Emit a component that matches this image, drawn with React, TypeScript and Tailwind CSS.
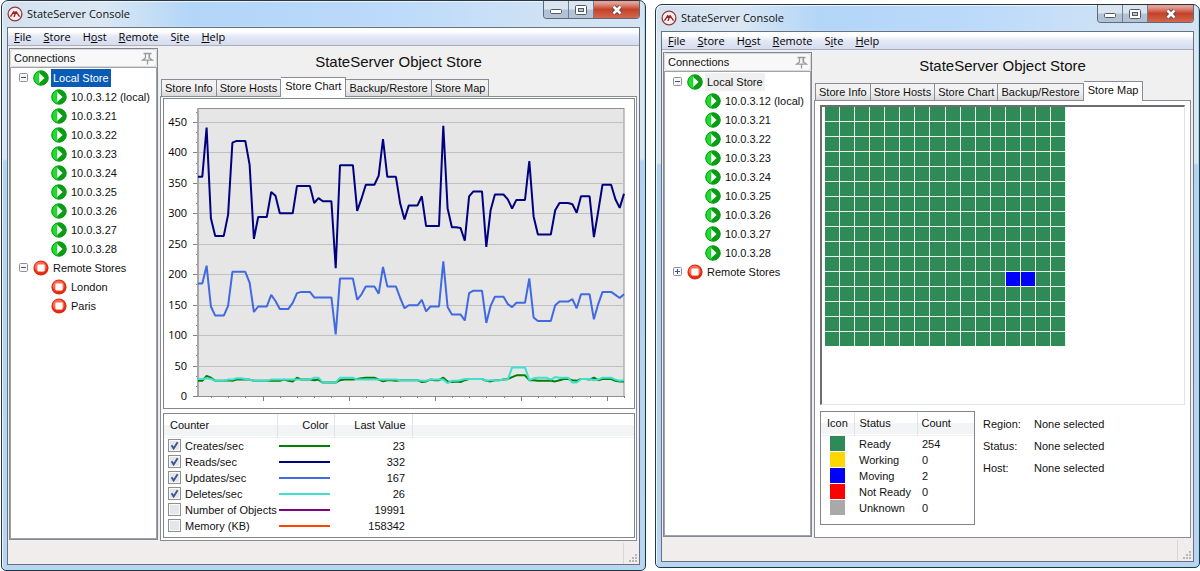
import { useState } from "react";
import type { ReactNode } from "react";

type NodeType = {
  label: string;
  kind: "play" | "stop";
};

type StoreNodeType = NodeType & {
  expanded: boolean;
  mark?: "selected" | "dimmed";
  children: NodeType[];
};

type CounterType = {
  name: string;
  color: string;
  value: string;
  checked: boolean;
};

const menuItems = [
  ["", "F", "ile"],
  ["", "S", "tore"],
  ["H", "o", "st"],
  ["", "R", "emote"],
  ["S", "i", "te"],
  ["", "H", "elp"],
];

const tabs = [
  "Store Info",
  "Store Hosts",
  "Store Chart",
  "Backup/Restore",
  "Store Map",
];

const hosts: NodeType[] = [
  "10.0.3.12 (local)",
  "10.0.3.21",
  "10.0.3.22",
  "10.0.3.23",
  "10.0.3.24",
  "10.0.3.25",
  "10.0.3.26",
  "10.0.3.27",
  "10.0.3.28",
].map((label) => ({ label, kind: "play" }));

const remotes: NodeType[] = [
  { label: "London", kind: "stop" },
  { label: "Paris", kind: "stop" },
];

const counters: CounterType[] = [
  { name: "Creates/sec", color: "#008000", value: "23", checked: true },
  { name: "Reads/sec", color: "#000080", value: "332", checked: true },
  { name: "Updates/sec", color: "#4169e1", value: "167", checked: true },
  { name: "Deletes/sec", color: "#40e0d0", value: "26", checked: true },
  { name: "Number of Objects", color: "#800080", value: "19991", checked: false },
  { name: "Memory (KB)", color: "#ff4500", value: "158342", checked: false },
];

const reads = [
  360, 360, 441, 292, 263, 263, 263, 298, 416, 419, 419, 419, 380, 258, 294,
  294, 294, 335, 329, 300, 300, 300, 300, 345, 345, 345, 345, 317, 325, 320,
  320, 320, 210, 379, 379, 379, 379, 304, 324, 347, 347, 347, 362, 422, 360,
  360, 360, 316, 290, 313, 313, 313, 328, 279, 279, 279, 279, 444, 308, 277,
  277, 276, 255, 328, 336, 336, 336, 245, 305, 331, 331, 331, 323, 308, 322,
  322, 322, 386, 295, 265, 265, 265, 265, 305, 317, 317, 317, 315, 301, 328,
  328, 328, 261, 303, 347, 347, 347, 323, 309, 332,
];

const updates = [
  185, 185, 214, 147, 132, 132, 132, 148, 204, 204, 204, 204, 186, 138, 147,
  147, 147, 166, 156, 143, 143, 143, 153, 169, 171, 171, 171, 162, 162, 162,
  162, 162, 101, 193, 193, 193, 193, 158, 167, 180, 180, 180, 168, 212, 180,
  180, 180, 161, 144, 149, 149, 149, 158, 139, 147, 147, 147, 221, 146, 134,
  134, 134, 124, 169, 173, 173, 173, 120, 148, 163, 163, 163, 151, 146, 153,
  153, 153, 193, 129, 123, 123, 123, 123, 149, 155, 155, 155, 159, 144, 167,
  167, 167, 126, 151, 171, 171, 171, 166, 161, 167,
];

const creates = [
  25, 25, 33, 30, 25, 25, 25, 26, 25, 27, 27, 27, 27, 25, 25, 25, 25, 25, 25,
  25, 27, 25, 24, 30, 27, 27, 27, 26, 27, 22, 22, 22, 22, 26, 27, 27, 27, 28,
  29, 30, 30, 30, 27, 24, 26, 26, 25, 26, 26, 26, 26, 26, 23, 24, 27, 26, 26,
  30, 24, 23, 24, 23, 26, 28, 28, 28, 28, 25, 24, 26, 26, 27, 28, 31, 34, 34,
  34, 26, 26, 25, 25, 25, 25, 24, 26, 28, 28, 26, 25, 28, 28, 27, 30, 26, 28,
  28, 28, 25, 24, 24,
];

const deletes = [
  28, 28, 29, 28, 25, 25, 25, 27, 27, 29, 29, 28, 27, 25, 25, 25, 25, 27, 27,
  27, 27, 27, 27, 27, 27, 27, 27, 30, 30, 22, 22, 22, 22, 30, 30, 30, 30, 27,
  27, 27, 27, 27, 27, 27, 27, 27, 27, 26, 26, 26, 26, 26, 25, 25, 27, 27, 27,
  27, 21, 25, 25, 26, 28, 28, 28, 28, 28, 25, 26, 26, 26, 27, 27, 47, 47, 47,
  47, 26, 29, 30, 30, 30, 27, 31, 30, 30, 30, 22, 22, 28, 28, 28, 26, 27, 30,
  30, 30, 27, 25, 26,
];

const legend = [
  { name: "Ready", count: 254, color: "#2e8b57" },
  { name: "Working", count: 0, color: "#ffd700" },
  { name: "Moving", count: 2, color: "#0000ff" },
  { name: "Not Ready", count: 0, color: "#ff0000" },
  { name: "Unknown", count: 0, color: "#a9a9a9" },
];

const Logo = () => (
  <svg viewBox="0 0 16 16" className="size-4 shrink-0">
    <circle cx="8" cy="8" r="6.9" fill="#f6eeee" stroke="#98363a" strokeWidth="1.3" />
    <path
      d="M3.8 10.2 6.8 5.6 8 8.2M7.2 10.4 9 5.6 12.2 10.2"
      fill="none"
      stroke="#8c2a2e"
      strokeWidth="1.4"
      strokeLinecap="round"
      strokeLinejoin="round"
    />
  </svg>
);

const PinIcon = () => (
  <svg viewBox="0 0 13 13" className="size-[13px]">
    <path
      d="M2.5 1.5h8M4.5 1.5v4.4L1.5 8.2h10L8.5 5.9V1.5M6.5 8.2v4.3"
      fill="#fff"
      stroke="#9a9a9a"
      strokeWidth="1.3"
    />
    <path d="M7.4 2v4.3l1.2 1.2" fill="none" stroke="#bdbdbd" />
  </svg>
);

const StatusIcon = ({ kind }: { kind: "play" | "stop" }) => {
  if (kind === "play") {
    return (
      <svg viewBox="0 0 16 16" className="size-4 shrink-0">
        <circle cx="8" cy="8" r="7.6" fill="#0a9c14" />
        <path d="M7 .9a7.2 7.2 0 0 0 0 14.2A22 22 0 0 1 7 .9z" fill="#1fdc2e" />
        <circle cx="8" cy="8" r="7.2" fill="none" stroke="#08a014" strokeWidth=".8" />
        <path d="M6.2 3 11.6 8l-5.4 5z" fill="#fff" />
      </svg>
    );
  }
  return (
    <svg viewBox="0 0 16 16" className="size-4 shrink-0">
      <circle cx="8" cy="8" r="7.6" fill="#e02c14" />
      <circle cx="7.6" cy="7.2" r="5.8" fill="#ff6a50" />
      <path d="M2.2 9a6.2 6.2 0 0 0 11.6 0A7.4 7.4 0 0 1 2.2 9z" fill="#f52a0c" />
      <rect x="4.4" y="4.4" width="7.2" height="7.2" rx="1" fill="#fff" />
    </svg>
  );
};

const Expander = ({ open }: { open: boolean }) => (
  <svg viewBox="0 0 9 9" className="size-[9px]">
    <rect x=".5" y=".5" width="8" height="8" rx="1" fill="#f6f6f6" stroke="#919191" />
    <path d={open ? "M2 4.5h5" : "M2 4.5h5M4.5 2v5"} stroke="#3a519c" />
  </svg>
);

const CaptionButtons = () => (
  <div className="flex h-[18px] overflow-hidden rounded-b-[4px] border border-t-0 border-[#5c6b7c]">
    <button
      aria-label="Minimize"
      className="flex w-[25px] items-center justify-center border-r border-[#6f7f90] bg-linear-to-b from-[#dbe5ef] from-45% to-[#b3c3d5] to-55%"
    >
      <svg viewBox="0 0 12 10" className="h-[10px] w-3">
        <rect x=".5" y="4.5" width="11" height="4" rx="1" fill="#fff" stroke="#525a68" />
      </svg>
    </button>
    <button
      aria-label="Maximize"
      className="flex w-[25px] items-center justify-center border-r border-[#6f7f90] bg-linear-to-b from-[#dbe5ef] from-45% to-[#b3c3d5] to-55%"
    >
      <svg viewBox="0 0 12 10" className="h-[10px] w-3">
        <rect x=".5" y=".5" width="11" height="9" rx="1" fill="#fff" stroke="#525a68" />
        <rect x="3.5" y="3.5" width="5" height="3" fill="#b9c6d6" stroke="#525a68" />
      </svg>
    </button>
    <button
      aria-label="Close"
      className="flex w-[45px] items-center justify-center bg-linear-to-b from-[#e5a195] from-10% via-[#c4412a] via-50% to-[#d4674a]"
    >
      <svg viewBox="0 0 12 10" className="h-[10px] w-3">
        <path d="M2.5 1.5 9.5 8.5M9.5 1.5 2.5 8.5" stroke="#57434a" strokeWidth="4.4" />
        <path d="M2.5 1.5 9.5 8.5M9.5 1.5 2.5 8.5" stroke="#fff" strokeWidth="2.6" />
      </svg>
    </button>
  </div>
);

const TreeRow = ({
  node,
  mark,
  child,
}: {
  node: NodeType;
  mark?: "selected" | "dimmed";
  child?: boolean;
}) => (
  <div
    className={
      child
        ? "flex h-[19px] items-center gap-[2px] pl-10 whitespace-nowrap"
        : "flex h-[19px] items-center gap-[2px] whitespace-nowrap"
    }
  >
    <StatusIcon kind={node.kind} />
    <span
      className={
        mark === "selected"
          ? "bg-[#0a5bb5] px-[2px] leading-[18px] text-white"
          : mark === "dimmed"
            ? "bg-[#f0f0f0] px-[2px] leading-[18px]"
            : "px-[2px] leading-[18px]"
      }
    >
      {node.label}
    </span>
  </div>
);

const Connections = ({ stores }: { stores: StoreNodeType[] }) => {
  const [open, setOpen] = useState(stores.map((s) => s.expanded));

  return (
    <aside className="flex w-[149px] shrink-0 flex-col border border-[#82868f] bg-[#f0f0f0]">
      <div className="flex h-[18px] items-center justify-between rounded-[3px] border border-[#d9d9d9] bg-[#f8f8f8] pr-[2px] pl-[3px]">
        <h2>Connections</h2>
        <button aria-label="Pin panel">
          <PinIcon />
        </button>
      </div>
      <ul className="flex-1 border border-[#a0a3a9] bg-white">
        {stores.map((store, i) => (
          <li key={store.label}>
            <div className="flex items-center gap-[5px] pl-2">
              <button
                aria-label={store.label}
                aria-expanded={open[i]}
                onClick={() => setOpen(open.map((o, j) => (j === i ? !o : o)))}
              >
                <Expander open={open[i]} />
              </button>
              <TreeRow node={store} mark={store.mark} />
            </div>
            {open[i] && (
              <ul>
                {store.children.map((child) => (
                  <li key={child.label}>
                    <TreeRow node={child} child />
                  </li>
                ))}
              </ul>
            )}
          </li>
        ))}
      </ul>
    </aside>
  );
};

const PLOT = { left: 34, right: 460, top: 9, bottom: 297 };
const UNIT = 274 / 450;

const toPoints = (values: number[]) =>
  values
    .map((v, i) => {
      const x = PLOT.left + (i * (PLOT.right - PLOT.left)) / (values.length - 1);
      return `${x.toFixed(1)},${(PLOT.bottom - v * UNIT).toFixed(1)}`;
    })
    .join(" ");

const StoreChart = () => {
  const majors = Array.from({ length: 10 }, (_, i) => i * 50);
  const minors = Array.from({ length: 29 }, (_, i) => (i * 50) / 3);
  const ticks = Array.from({ length: 25 }, (_, i) => i * 4 + 3);

  return (
    <svg viewBox="0 0 470 309" className="block w-full" role="img" aria-label="Store Chart">
      <rect
        x={PLOT.left}
        y={PLOT.top + 0.5}
        width={PLOT.right - PLOT.left}
        height={PLOT.bottom - PLOT.top}
        fill="#e6e6e6"
        stroke="#909090"
      />
      {majors.slice(1).map((v) => (
        <path
          key={v}
          d={`M${PLOT.left} ${Math.round(PLOT.bottom - v * UNIT) + 0.5}H${PLOT.right}`}
          stroke="#c0c0c0"
        />
      ))}
      {minors.map((v) => (
        <path
          key={v}
          d={`M${PLOT.left - 2} ${Math.round(PLOT.bottom - v * UNIT) + 0.5}h2`}
          stroke="#808080"
        />
      ))}
      {majors.map((v) => (
        <g key={v}>
          <path
            d={`M${PLOT.left - 5} ${Math.round(PLOT.bottom - v * UNIT) + 0.5}h5`}
            stroke="#808080"
          />
          <text
            x="23"
            y={Math.round(PLOT.bottom - v * UNIT) + 4}
            textAnchor="end"
            className="fill-black font-['Open_Sans',sans-serif] text-[11px]"
          >
            {v}
          </text>
        </g>
      ))}
      <path d={`M${PLOT.left} ${PLOT.top}V${PLOT.bottom}`} stroke="#a8a8a8" strokeWidth="2" />
      {ticks.map((i) => (
        <path
          key={i}
          d={`M${Math.round(PLOT.left + (i * 426) / 99) + 0.5} ${PLOT.bottom}v${i % 20 === 15 ? 5 : 2}`}
          stroke="#808080"
        />
      ))}
      <polyline points={toPoints(reads)} fill="none" stroke="#000080" strokeWidth="2" strokeLinejoin="bevel" />
      <polyline points={toPoints(updates)} fill="none" stroke="#4169e1" strokeWidth="2" strokeLinejoin="bevel" />
      <polyline points={toPoints(creates)} fill="none" stroke="#008000" strokeWidth="2" strokeLinejoin="bevel" />
      <polyline points={toPoints(deletes)} fill="none" stroke="#40e0d0" strokeWidth="2" strokeLinejoin="bevel" />
    </svg>
  );
};

const CounterTable = () => {
  const [rows, setRows] = useState(counters);

  const toggle = (name: string) =>
    setRows(rows.map((r) => (r.name === name ? { ...r, checked: !r.checked } : r)));

  return (
    <table className="w-full table-fixed">
      <colgroup>
        <col className="w-[113px]" />
        <col className="w-[57px]" />
        <col className="w-[78px]" />
        <col />
      </colgroup>
      <thead>
        <tr className="h-[23px] border-b border-[#f0f0f2] bg-linear-to-b from-white from-50% to-[#f3f4f6] to-50%">
          <th className="border-r border-[#e2e3e6] pl-[6px] text-left font-normal">Counter</th>
          <th className="border-r border-[#e2e3e6] pr-[5px] text-right font-normal">Color</th>
          <th className="border-r border-[#e2e3e6] pr-[6px] text-right font-normal">Last Value</th>
          <td />
        </tr>
      </thead>
      <tbody>
        {rows.map((row) => (
          <tr key={row.name} className="h-4">
            <td className="pl-1">
              <label className="flex items-center gap-1 leading-4 whitespace-nowrap">
                <span className="relative size-[13px] shrink-0">
                  <input
                    type="checkbox"
                    checked={row.checked}
                    onChange={() => toggle(row.name)}
                    className="peer block size-[13px] appearance-none border border-[#8e8f8f] bg-[#e4e6ea] shadow-[inset_0_0_0_1px_#fafafa]"
                  />
                  <svg
                    viewBox="0 0 13 13"
                    className="pointer-events-none absolute inset-0 hidden size-[13px] peer-checked:block"
                  >
                    <path d="M3.5 6.2 5.6 9.4 9.6 3.2" fill="none" stroke="#3d5590" strokeWidth="1.9" />
                  </svg>
                </span>
                {row.name}
              </label>
            </td>
            <td className="pl-[2px]">
              <div className="h-[2px] w-[51px]" style={{ backgroundColor: row.color }} />
            </td>
            <td className="pr-[7px] text-right leading-4">{row.value}</td>
            <td />
          </tr>
        ))}
      </tbody>
    </table>
  );
};

const StoreMap = () => (
  <div className="h-[300px] border-t-2 border-r border-b border-l-2 border-t-[#6d6d6d] border-r-[#e3e3e3] border-b-[#e3e3e3] border-l-[#6d6d6d] bg-white pl-[3px]">
    <div className="grid w-[241px] grid-cols-16 gap-px border-r border-[#e8f3ec] bg-[#e8f3ec]">
      {Array.from({ length: 256 }, (_, i) => (
        <div
          key={i}
          className={i === 188 || i === 189 ? "h-[14px] bg-[#0000ff]" : "h-[14px] bg-[#2e8b57]"}
        />
      ))}
    </div>
  </div>
);

const Legend = () => (
  <div className="h-[114px] w-[155px] shrink-0 border border-[#82868f] bg-white">
    <table className="w-full table-fixed">
      <colgroup>
        <col className="w-[33px]" />
        <col className="w-[63px]" />
        <col />
      </colgroup>
      <thead>
        <tr className="h-[23px] border-b border-[#f0f0f2] bg-linear-to-b from-white from-50% to-[#f3f4f6] to-50%">
          <th className="border-r border-[#e2e3e6] pl-[6px] text-left font-normal">Icon</th>
          <th className="border-r border-[#e2e3e6] pl-[5px] text-left font-normal">Status</th>
          <th className="pl-1 text-left font-normal">Count</th>
        </tr>
      </thead>
      <tbody>
        {legend.map((item) => (
          <tr key={item.name} className="h-4">
            <td className="pl-[9px]">
              <div className="size-[15px]" style={{ backgroundColor: item.color }} />
            </td>
            <td className="pl-[5px] leading-4">{item.name}</td>
            <td className="pl-[5px] leading-4">{item.count}</td>
          </tr>
        ))}
      </tbody>
    </table>
  </div>
);

const Grip = () => (
  <svg viewBox="0 0 9 9" className="size-[9px]">
    {[
      [6, 0],
      [3, 3],
      [6, 3],
      [0, 6],
      [3, 6],
      [6, 6],
    ].map(([x, y]) => (
      <rect key={`${x}-${y}`} x={x} y={y} width="2" height="2" fill="#b9b6b6" />
    ))}
  </svg>
);

const ConsoleWindow = ({
  stores,
  active,
  children,
}: {
  stores: StoreNodeType[];
  active: string;
  children: ReactNode;
}) => (
  <div className="rounded-t-[7px] rounded-b-[5px] border border-[#2b3540] bg-[linear-gradient(180deg,#d8e7f500_0px,#d8e7f500_24px,#dbe8f4_30px,#dbe8f4_158px,#b4d3f2_160px,#b9d5f1_100%),linear-gradient(90deg,#d3e2ef_0%,#dbe8f4_15%,#b2d5f8_30%,#bcdafa_60%,#cfe2f5_85%,#d5e4f3_100%)] px-[5px] pb-[5px] shadow-[inset_1px_1px_0_#eaf6ff,inset_-1px_-1px_0_#9fdcf5]">
    <header className="flex h-[26px] items-start justify-between">
      <div className="flex h-[26px] items-center gap-1 font-['Open_Sans',sans-serif]">
        <Logo />
        <h1>StateServer Console</h1>
      </div>
      <CaptionButtons />
    </header>
    <div className="border border-[#66727f] bg-[#f0f0f0]">
      <nav className="flex h-[18px] items-center gap-3 border-b border-[#a9aebd] bg-linear-to-b from-white from-20% via-[#e4e9f6] via-50% to-[#d6dcee] pt-px pl-[6px] font-['Open_Sans',sans-serif] text-black">
        {menuItems.map(([before, key, after]) => (
          <button key={before + key + after}>
            {before}
            <u>{key}</u>
            {after}
          </button>
        ))}
      </nav>
      <div className="flex gap-[2px] pr-[2px] pl-px">
        <div className="flex pt-[2px] pb-px">
          <Connections stores={stores} />
        </div>
        <main className="min-w-0 flex-1">
          <h2 className="flex h-[31px] items-center justify-center pt-px text-[15px]">
            StateServer Object Store
          </h2>
          <div role="tablist" className="relative flex h-5 items-end pl-px">
            {tabs.map((tab) => (
              <button
                key={tab}
                role="tab"
                aria-selected={tab === active}
                className={
                  tab === active
                    ? "z-10 h-5 border border-l-0 border-b-0 border-[#898c95] bg-white px-1 pb-1 leading-4"
                    : "h-[18px] border border-[#898c95] bg-linear-to-b from-[#f2f2f2] from-50% to-[#d8d8d8] px-[3px] leading-4 not-first:border-l-0"
                }
              >
                {tab}
              </button>
            ))}
          </div>
          <div className="-mt-px border border-[#898c95] bg-white">{children}</div>
        </main>
      </div>
      <footer className="flex h-[23px] items-end justify-end bg-[#f0edec]">
        <div className="flex h-[21px] w-4 items-end justify-end border-l border-[#d9d7d6] pr-px pb-px">
          <Grip />
        </div>
      </footer>
    </div>
  </div>
);

export default function App() {
  return (
    <div className="flex items-start gap-[9px] bg-white pl-px font-['Liberation_Sans',sans-serif] text-[11px] text-[#111]">
      <div className="flex-[645] min-w-0">
        <ConsoleWindow
          active="Store Chart"
          stores={[
            { label: "Local Store", kind: "play", expanded: true, mark: "selected", children: hosts },
            { label: "Remote Stores", kind: "stop", expanded: true, children: remotes },
          ]}
        >
          <div className="flex flex-col gap-1 pt-px pr-px pb-[2px] pl-[2px]">
            <div className="border border-[#82868f] bg-white">
              <StoreChart />
            </div>
            <div className="h-[125px] border border-[#82868f] bg-white">
              <CounterTable />
            </div>
          </div>
        </ConsoleWindow>
      </div>
      <div className="mt-1 flex-[545] min-w-0">
        <ConsoleWindow
          active="Store Map"
          stores={[
            { label: "Local Store", kind: "play", expanded: true, mark: "dimmed", children: hosts },
            { label: "Remote Stores", kind: "stop", expanded: false, children: remotes },
          ]}
        >
          <div className="flex flex-col gap-[6px] pt-1 pr-[5px] pb-3 pl-[5px]">
            <StoreMap />
            <div className="flex gap-2">
              <Legend />
              <dl className="grid auto-rows-[22px] grid-cols-[51px_auto] items-center pt-[2px]">
                {["Region:", "Status:", "Host:"].map((name) => (
                  <div key={name} className="contents">
                    <dt>{name}</dt>
                    <dd>None selected</dd>
                  </div>
                ))}
              </dl>
            </div>
          </div>
        </ConsoleWindow>
      </div>
    </div>
  );
}
